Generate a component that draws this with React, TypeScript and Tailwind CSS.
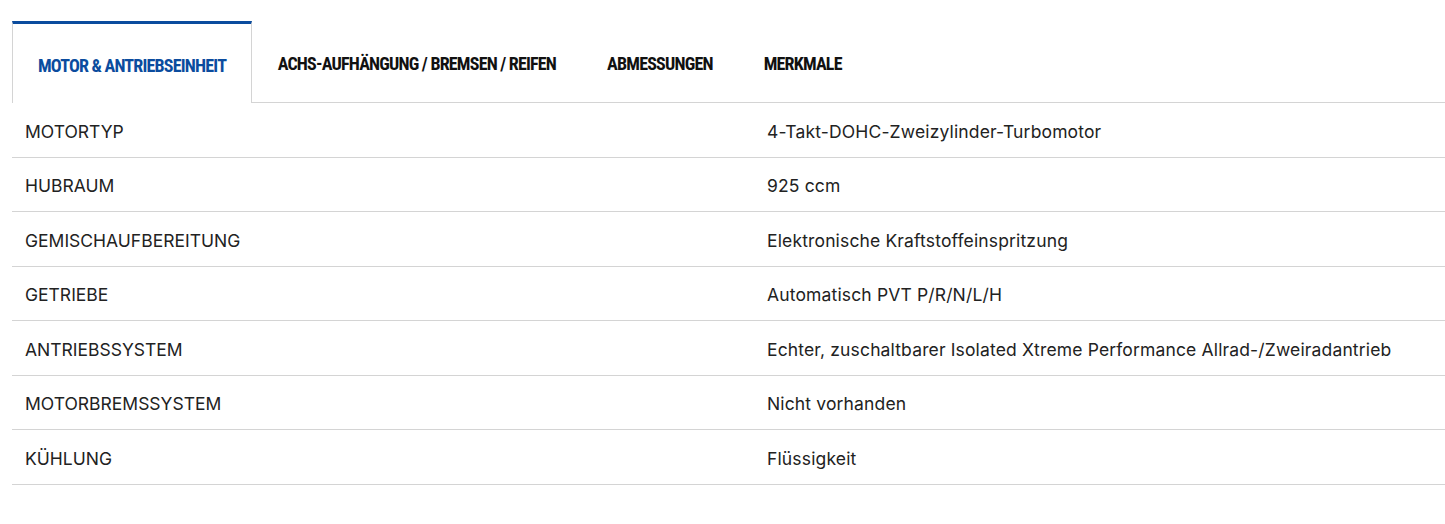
const tabs = [
  'MOTOR & ANTRIEBSEINHEIT',
  'ACHS-AUFHÄNGUNG / BREMSEN / REIFEN',
  'ABMESSUNGEN',
  'MERKMALE',
];

const rows: [string, string][] = [
  ['MOTORTYP', '4-Takt-DOHC-Zweizylinder-Turbomotor'],
  ['HUBRAUM', '925 ccm'],
  ['GEMISCHAUFBEREITUNG', 'Elektronische Kraftstoffeinspritzung'],
  ['GETRIEBE', 'Automatisch PVT P/R/N/L/H'],
  ['ANTRIEBSSYSTEM', 'Echter, zuschaltbarer Isolated Xtreme Performance Allrad-/Zweiradantrieb'],
  ['MOTORBREMSSYSTEM', 'Nicht vorhanden'],
  ['KÜHLUNG', 'Flüssigkeit'],
];

export default function App() {
  return (
    <main className="min-h-[524px] bg-white pl-[12px] pt-[21px]">
      {/* Tabs */}
      <nav className="flex font-['Roboto',sans-serif] font-stretch-[75%] text-[18px] font-bold tracking-[-0.8px]">
        {tabs.map((t, i) =>
          i === 0 ? (
            <div
              key={t}
              className="flex h-[82px] items-center border-x border-t-[3px] border-x-[#d4d4d4] border-t-[#0b4c9e] px-[25px] pt-[3px] text-[#0b4c9e]"
            >
              {t}
            </div>
          ) : (
            <div
              key={t}
              className="flex h-[82px] items-center border-b border-[#d4d4d4] px-[25.5px] pt-[3px] text-[#111]"
            >
              {t}
            </div>
          )
        )}
        <div className="flex-1 border-b border-[#d4d4d4]" />
      </nav>

      {/* Spec table */}
      <div className="font-['Inter','Roboto',sans-serif] text-[17.5px] text-[#222]">
        {rows.map(([k, v]) => (
          <div key={k} className="grid h-[54.5px] grid-cols-[743px_1fr] items-center border-b border-[#d4d4d4] pt-[4px]">
            <div className="px-[13px]">{k}</div>
            <div className="px-[12px] tracking-[0.15px]">{v}</div>
          </div>
        ))}
      </div>
    </main>
  );
}
